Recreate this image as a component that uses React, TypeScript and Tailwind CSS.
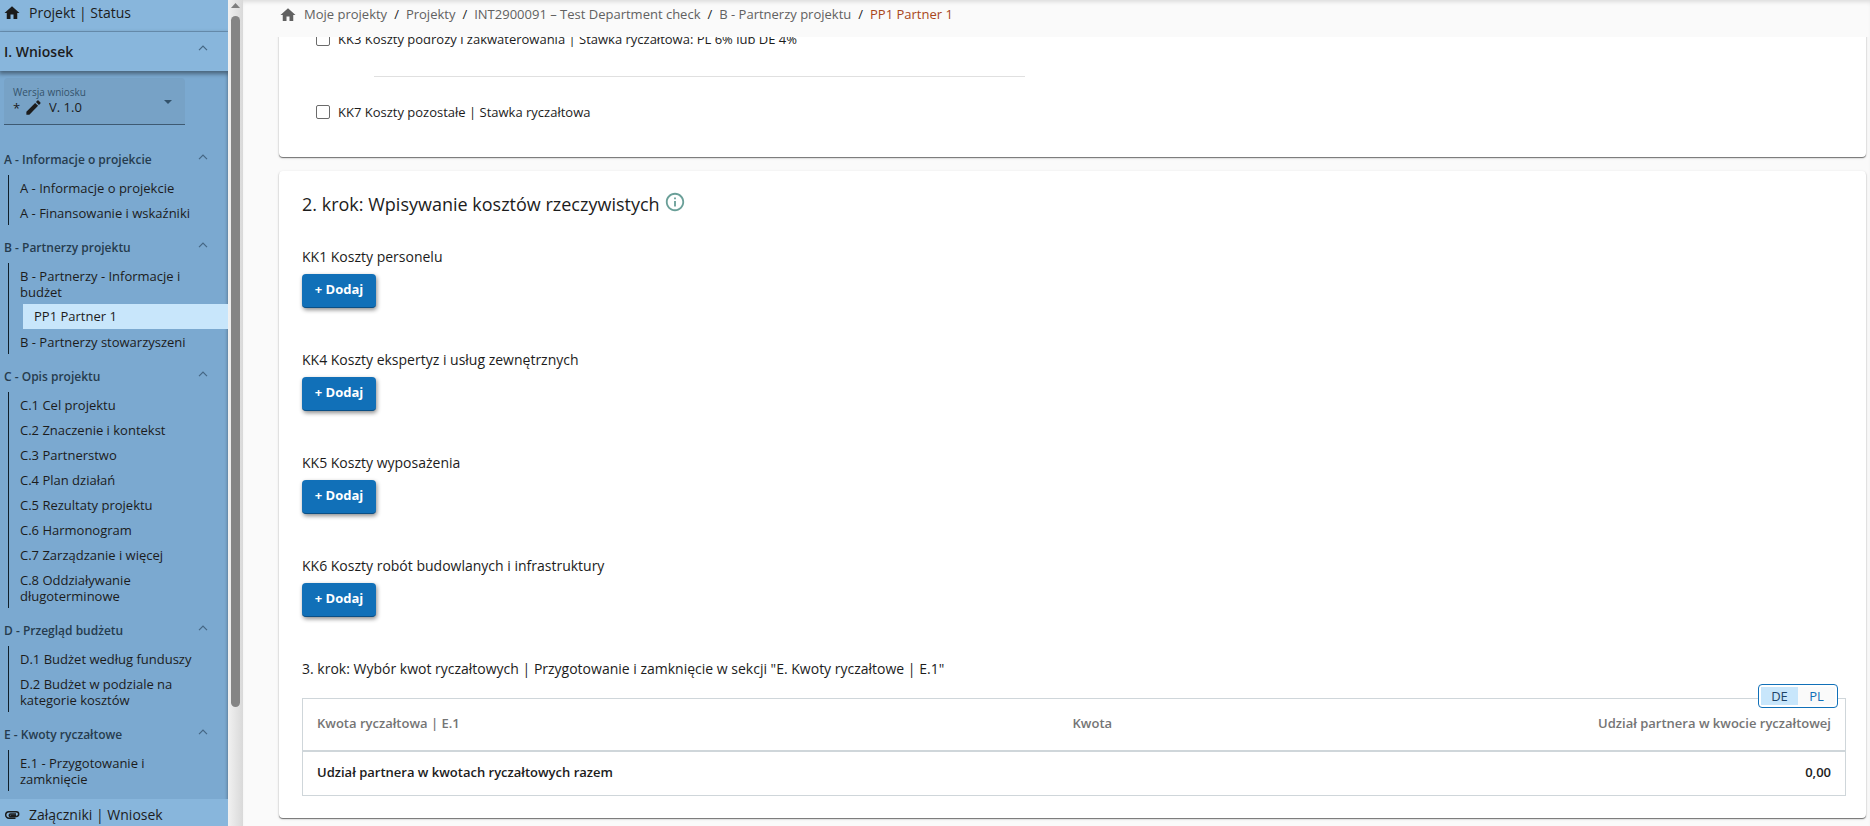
import { MdEdit, MdHome, MdInfoOutline } from "react-icons/md";

type NavItem = { label: string; active?: boolean };

const sections: { title: string; items: NavItem[] }[] = [
  {
    title: "A - Informacje o projekcie",
    items: [
      { label: "A - Informacje o projekcie" },
      { label: "A - Finansowanie i wskaźniki" },
    ],
  },
  {
    title: "B - Partnerzy projektu",
    items: [
      { label: "B - Partnerzy - Informacje i budżet" },
      { label: "PP1 Partner 1", active: true },
      { label: "B - Partnerzy stowarzyszeni" },
    ],
  },
  {
    title: "C - Opis projektu",
    items: [
      { label: "C.1 Cel projektu" },
      { label: "C.2 Znaczenie i kontekst" },
      { label: "C.3 Partnerstwo" },
      { label: "C.4 Plan działań" },
      { label: "C.5 Rezultaty projektu" },
      { label: "C.6 Harmonogram" },
      { label: "C.7 Zarządzanie i więcej" },
      { label: "C.8 Oddziaływanie długoterminowe" },
    ],
  },
  {
    title: "D - Przegląd budżetu",
    items: [
      { label: "D.1 Budżet według funduszy" },
      { label: "D.2 Budżet w podziale na kategorie kosztów" },
    ],
  },
  {
    title: "E - Kwoty ryczałtowe",
    items: [{ label: "E.1 - Przygotowanie i zamknięcie" }],
  },
];

const breadcrumbs = [
  "Moje projekty",
  "Projekty",
  "INT2900091 – Test Department check",
  "B - Partnerzy projektu",
];

const costs = [
  "KK1 Koszty personelu",
  "KK4 Koszty ekspertyz i usług zewnętrznych",
  "KK5 Koszty wyposażenia",
  "KK6 Koszty robót budowlanych i infrastruktury",
];

function Chevron() {
  return (
    <svg
      width="10"
      height="6"
      viewBox="0 0 10 6"
      fill="none"
      stroke="#456784"
      strokeWidth="1.2"
      className="shrink-0"
    >
      <path d="M1 5.2 5 1.2 9 5.2" />
    </svg>
  );
}

function AttachmentIcon() {
  return (
    <svg
      width="18"
      height="18"
      viewBox="0 0 18 18"
      fill="none"
      stroke="currentColor"
      strokeWidth="1.5"
    >
      <path d="M12.500 12.300H6A3.300 3.300 0 0 1 6 5.700h7.300a2.400 2.400 0 0 1 0 4.800H7.500a1.200 1.200 0 0 1 0-2.500H13" />
      <path d="M7.500 9.300H13" />
    </svg>
  );
}

function NavSection({ title, items }: { title: string; items: NavItem[] }) {
  return (
    <section>
      <button
        type="button"
        className="flex h-[38px] w-full justify-between pl-1 pr-5 pt-[13px] text-left text-xs font-semibold leading-5 text-[#263c4e]"
      >
        {title}
        <span className="pt-1">
          <Chevron />
        </span>
      </button>
      <ul className="ml-2 border-l border-[#10202c]">
        {items.map(({ label, active }) => (
          <li key={label}>
            {active ? (
              <a
                href="#"
                aria-current="page"
                className="ml-[14px] block bg-[#c8e6fb] py-1 pl-[11px] text-[13px] leading-[17px]"
              >
                {label}
              </a>
            ) : (
              <a
                href="#"
                className="block pb-1 pl-[11px] pr-8 pt-[5px] text-[13px] leading-4"
              >
                {label}
              </a>
            )}
          </li>
        ))}
      </ul>
    </section>
  );
}

function Sidebar() {
  return (
    <nav className="flex w-[228px] shrink-0 flex-col overflow-hidden bg-[#7ba9d0] shadow-[inset_-3px_0_3px_-2px_rgba(0,0,0,0.25)]">
      <a
        href="#"
        className="flex h-8 shrink-0 items-center border-b border-[#6f98bb] bg-[#88b6dc] pb-[6px] pl-[3px] text-sm"
      >
        <MdHome size={18} />
        <span className="pl-2">Projekt | Status</span>
      </a>
      <button
        type="button"
        className="z-10 flex h-[39px] shrink-0 items-center justify-between bg-[#88b6dc] pl-1 pr-5 text-sm font-semibold shadow-[0_2px_4px_1px_rgba(0,0,0,0.4)]"
      >
        I. Wniosek
        <span className="pb-2">
          <Chevron />
        </span>
      </button>
      <div className="ml-1 mr-[43px] mt-[7px] flex h-[47px] shrink-0 flex-col rounded-t border-b border-[#3e5a72] bg-[#77a2c6] pl-[9px] pt-2">
        <label htmlFor="version" className="text-[10px] leading-3 text-[#34536c]">
          Wersja wniosku
        </label>
        <div className="flex items-center text-[13px] leading-4">
          <span className="w-[11px]">*</span>
          <MdEdit size={19} />
          <select
            id="version"
            className="ml-1 min-w-0 flex-1 appearance-none bg-transparent pb-[2px] pl-[2px] leading-4 outline-none"
          >
            <option>V. 1.0</option>
          </select>
          <svg width="8" height="4" viewBox="0 0 8 4" className="mb-3 mr-[13px]">
            <path d="M0 0h8L4 4z" fill="#33526b" />
          </svg>
        </div>
      </div>
      <div className="flex flex-col pb-2 pt-3">
        {sections.map((section) => (
          <NavSection key={section.title} {...section} />
        ))}
      </div>
      <a
        href="#"
        className="flex h-8 shrink-0 items-center bg-[#88b6dc] pl-[3px] text-sm"
      >
        <AttachmentIcon />
        <span className="pl-2">Załączniki | Wniosek</span>
      </a>
    </nav>
  );
}

function ScrollTrack() {
  return (
    <div className="flex w-[15px] shrink-0 flex-col items-center bg-linear-to-r from-[#f1f1f1] to-[#d9d9d9] pt-[3px]">
      <svg width="9" height="5" viewBox="0 0 9 5">
        <path d="M4.500 0 9 5H0z" fill="#7f7f7f" />
      </svg>
      <div className="mt-2 h-[84%] w-[9px] rounded-full bg-[#858585]" />
    </div>
  );
}

function FlatRate({ id, label }: { id: string; label: string }) {
  return (
    <div className="flex items-center gap-2 leading-5">
      <input
        id={id}
        type="checkbox"
        className="size-[14px] appearance-none rounded-xs border border-[#6b6b6b] bg-white"
      />
      <label htmlFor={id}>{label}</label>
    </div>
  );
}

function LumpSums() {
  return (
    <div className="relative">
      <table className="w-full table-fixed border border-[#cfd6da] text-[13px]">
        <thead>
          <tr className="h-[52px] border-b-2 border-[#cfd6da] text-[#757575]">
            <th className="w-[49%] px-[14px] pb-[2px] text-left font-semibold">
              Kwota ryczałtowa | E.1
            </th>
            <th className="px-[14px] pb-[2px] text-left font-semibold">Kwota</th>
            <th className="px-[14px] pb-[2px] text-right font-semibold">
              Udział partnera w kwocie ryczałtowej
            </th>
          </tr>
        </thead>
        <tbody>
          <tr className="h-[45px]">
            <td className="px-[14px] pb-[2px] font-semibold" colSpan={2}>
              Udział partnera w kwotach ryczałtowych razem
            </td>
            <td className="px-[14px] pb-[2px] text-right font-semibold">0,00</td>
          </tr>
        </tbody>
      </table>
      <div className="absolute -top-[14px] right-2 flex h-6 w-20 rounded-sm border border-[#1170b8] bg-white p-[2px] text-[13px] leading-4">
        <button type="button" className="flex-1 bg-[#c8e6fb] text-[#1d4468]">
          DE
        </button>
        <button type="button" className="flex-1 bg-[#fafafa] text-[#1170b8]">
          PL
        </button>
      </div>
    </div>
  );
}

export default function App() {
  return (
    <div className="flex h-screen overflow-hidden bg-[#fafafa] font-['Open_Sans',sans-serif] text-[#1c1c1c]">
      <Sidebar />
      <ScrollTrack />
      <main className="flex min-w-0 flex-1 flex-col shadow-[inset_0_4px_4px_-2px_rgba(0,0,0,0.12)]">
        <nav
          aria-label="breadcrumb"
          className="flex h-[37px] shrink-0 items-center pb-2 pl-9 text-[13px] text-[#616161]"
        >
          <MdHome size={18} className="mr-[7px]" />
          {breadcrumbs.map((crumb) => (
            <span key={crumb}>
              <a href="#">{crumb}</a>
              <span className="px-[7px] text-[#1c1c1c]">/</span>
            </span>
          ))}
          <a href="#" aria-current="page" className="text-[#a8461a]">
            PP1 Partner 1
          </a>
        </nav>
        <div className="flex flex-1 flex-col gap-[14px] overflow-hidden pl-9 pr-1">
          <section className="-mt-2 rounded-sm bg-white px-[37px] pb-[35px] text-[13px] shadow-[0_1px_1px_rgba(0,0,0,0.5),0_1px_3px_rgba(0,0,0,0.14)]">
            <FlatRate id="kk3" label="KK3 Koszty podróży i zakwaterowania | Stawka ryczałtowa: PL 6% lub DE 4%" />
            <hr className="mb-[25px] ml-[58px] mt-[27px] w-[43%] border-[#e0e0e0]" />
            <FlatRate id="kk7" label="KK7 Koszty pozostałe | Stawka ryczałtowa" />
          </section>
          <section className="rounded-sm bg-white px-[23px] pb-[22px] pr-5 pt-[19px] text-sm shadow-[0_1px_1px_rgba(0,0,0,0.5),0_1px_3px_rgba(0,0,0,0.14)]">
            <h2 className="flex h-7 items-center gap-1 text-lg">
              2. krok: Wpisywanie kosztów rzeczywistych
              <MdInfoOutline size={22} className="mb-1 text-[#6a9f98]" />
            </h2>
            <div className="flex flex-col pt-[29px]">
              {costs.map((cost) => (
                <div key={cost} className="h-[103px]">
                  <h3 className="leading-5">{cost}</h3>
                  <button
                    type="button"
                    className="mt-[7px] h-[34px] w-[74px] rounded-sm border-b border-[#0b4f85] bg-[#1170b8] pb-[2px] text-[13px] font-bold text-white shadow-[1px_2px_4px_rgba(0,0,0,0.45)]"
                  >
                    + Dodaj
                  </button>
                </div>
              ))}
            </div>
            <h3 className="pb-[19px] leading-5">
              3. krok: Wybór kwot ryczałtowych | Przygotowanie i zamknięcie w
              sekcji "E. Kwoty ryczałtowe | E.1"
            </h3>
            <LumpSums />
          </section>
        </div>
      </main>
    </div>
  );
}
